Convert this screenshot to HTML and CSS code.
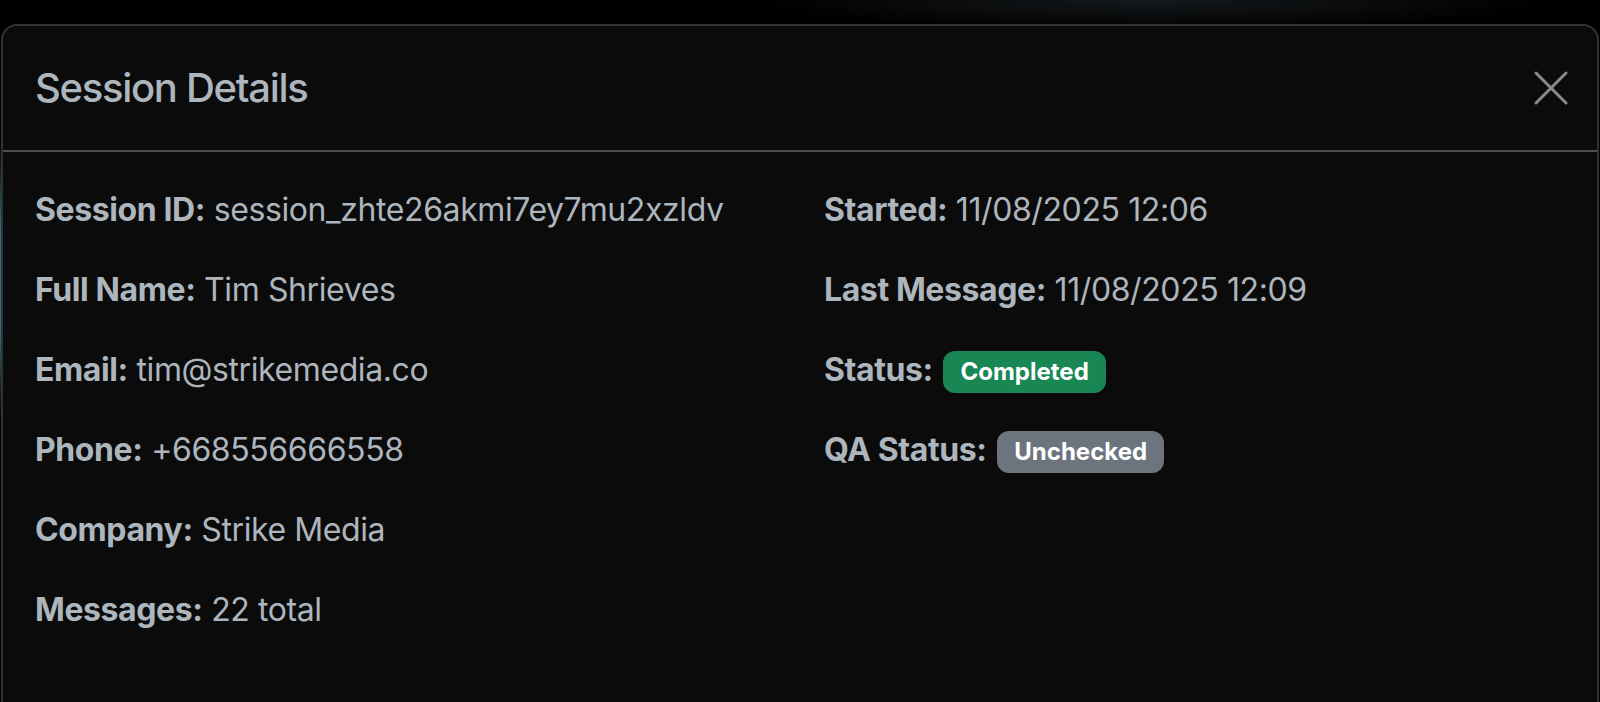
FILE: index.html
```html
<!DOCTYPE html>
<html lang="en">
<head>
<meta charset="utf-8">
<title>Session Details</title>
<link rel="stylesheet" href="styles.css">
</head>
<body>
<div class="backdrop">
  <div class="modal">
    <div class="modal-header">
      <h5 class="modal-title">Session Details</h5>
      <button class="btn-close" aria-label="Close">
        <svg width="34" height="34" viewBox="0 0 34 34"><path d="M2 2 L32 32 M32 2 L2 32" stroke="#8a8a8a" stroke-width="3" stroke-linecap="round" fill="none"/></svg>
      </button>
    </div>
    <div class="modal-body">
      <div class="row">
        <div class="col">
          <p><strong>Session ID:</strong> session_zhte26akmi7ey7mu2xzldv</p>
          <p><strong>Full Name:</strong> Tim Shrieves</p>
          <p><strong>Email:</strong> tim@strikemedia.co</p>
          <p><strong>Phone:</strong> +668556666558</p>
          <p><strong>Company:</strong> Strike Media</p>
          <p><strong>Messages:</strong> 22 total</p>
        </div>
        <div class="col">
          <p><strong>Started:</strong> 11/08/2025 12:06</p>
          <p><strong>Last Message:</strong> 11/08/2025 12:09</p>
          <p><strong>Status:</strong> <span class="badge badge-success">Completed</span></p>
          <p><strong>QA Status:</strong> <span class="badge badge-secondary">Unchecked</span></p>
        </div>
      </div>
    </div>
  </div>
</div>
</body>
</html>
```
FILE: styles.css
```css
* { box-sizing: border-box; }
html, body {
  margin: 0;
  height: 100%;
  background: #000;
  overflow: hidden;
}
body {
  font-family: Inter, "Noto Sans", sans-serif;
  font-size: 32px;
  line-height: 1.5;
  color: #adb5bd;
  letter-spacing: -0.4px;
}
.backdrop {
  padding: 24px 1px 0 1px;
  height: 100%;
  background:
    linear-gradient(to bottom, transparent 140px, #2f6f80 230px, #2f6f80 330px, transparent 420px) left top / 2px 100% no-repeat,
    radial-gradient(ellipse 400px 30px at 1150px 0, #15191c 0%, #000 100%);
}
.modal {
  background: #0b0b0c;
  border: 2px solid #303236;
  border-bottom: none;
  border-radius: 16px 16px 0 0;
  height: 100%;
}
.modal-header {
  display: flex;
  align-items: center;
  justify-content: space-between;
  padding: 32px 29px 32px 32px;
  border-bottom: 2px solid #4a4e55;
}
.modal-title {
  margin: 0;
  font-size: 40px;
  font-weight: 500;
  line-height: 1.5;
  letter-spacing: -1.3px;
  color: #adb5bd;
}
.btn-close {
  background: none;
  border: 0;
  padding: 0;
  width: 34px;
  height: 34px;
  display: flex;
}
.modal-body {
  padding: 34px 32px;
}
.row {
  display: grid;
  grid-template-columns: 1fr 1fr;
  column-gap: 48px;
}
.col p {
  margin: 0 0 32px 0;
  white-space: nowrap;
}
strong { font-weight: 700; }
.badge {
  display: inline-block;
  font-size: 24px;
  font-weight: 700;
  line-height: 1;
  letter-spacing: 0;
  color: #fff;
  padding: 9px 17px;
  margin-left: 2px;
  border-radius: 12px;
  vertical-align: 1px;
}
.badge-success { background: #198754; }
.badge-secondary { background: #6c757d; }
```
